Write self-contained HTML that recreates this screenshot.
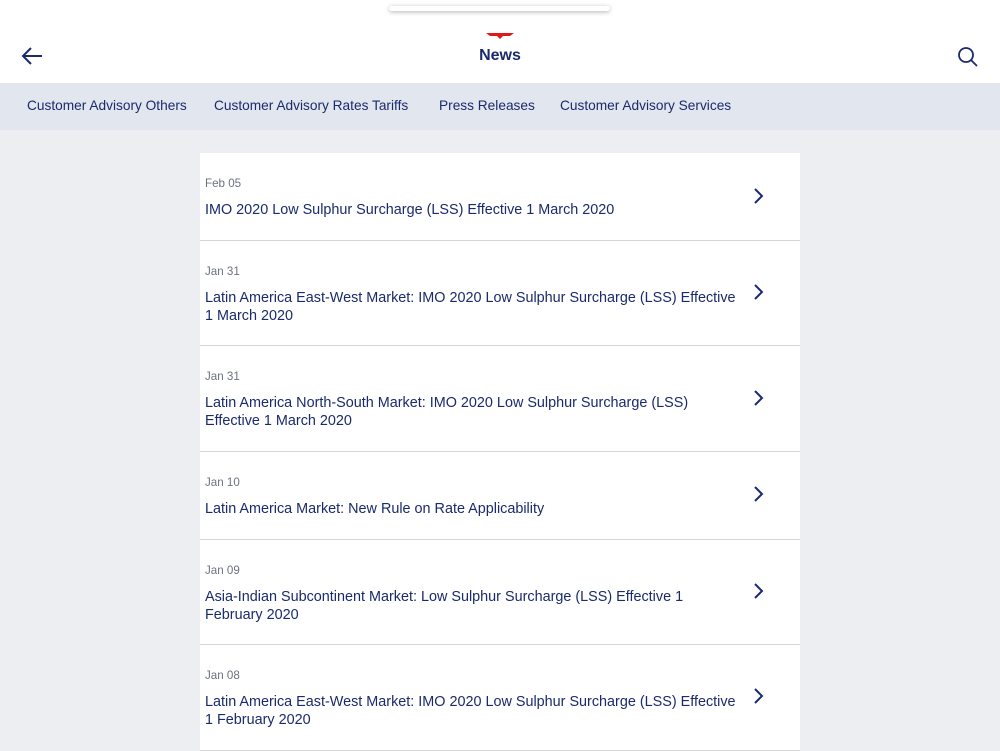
<!DOCTYPE html>
<html><head><style>
body{margin:0;width:1000px;height:750px;overflow:hidden;background:#eceef2;font-family:"Liberation Sans",sans-serif;color:#1a2a6c}
.top{position:absolute;top:0;left:0;width:1000px;height:83px;background:#fff}
.pill{position:absolute;left:389px;top:6px;width:221px;height:5px;border-radius:3px;background:#fff;box-shadow:0 1px 5px rgba(0,0,0,.3)}
.title{position:absolute;left:0;width:1000px;top:47px;text-align:center;font-weight:bold;font-size:16px;color:#1a2a6c}
.tabs{position:absolute;top:83px;left:0;width:1000px;height:47px;background:#e2e6ee;font-size:13.7px;color:#1a2a6c}
.tabs span{position:absolute;top:15px}
.list{position:absolute;left:200px;top:153px;width:600px;background:#fff}
.it{position:relative;padding:23px 60px 21px 5px;border-bottom:1px solid #d4d6da}
.it.two{padding-bottom:20.4px}
.d{font-size:11.6px;line-height:16px;color:#6b7280;margin-bottom:9px}
.t{font-size:14.4px;line-height:18px;color:#1a2a6c}
.ch{position:absolute;left:552px;top:50%;margin-top:-10px}
</style></head><body>
<div class="top">
<div class="pill"></div>
<svg style="position:absolute;left:20px;top:44px" width="24" height="24" viewBox="0 0 24 24"><path d="M22 12H3M11 4l-8 8 8 8" fill="none" stroke="#1a2a6c" stroke-width="2"/></svg>
<svg style="position:absolute;left:486px;top:32px" width="28" height="8" viewBox="0 0 28 8"><path d="M0 1h28l-4 3h-7l-3 3-3-3H4z" fill="#e01818"/></svg>
<div class="title">News</div>
<svg style="position:absolute;left:956px;top:45px" width="24" height="24" viewBox="0 0 24 24"><circle cx="10" cy="10" r="7" fill="none" stroke="#1a2a6c" stroke-width="1.8"/><path d="M15 15l6 6" stroke="#1a2a6c" stroke-width="1.8"/></svg>
</div>
<div class="tabs"><span style="left:27px">Customer Advisory Others</span><span style="left:214px">Customer Advisory Rates Tariffs</span><span style="left:439px">Press Releases</span><span style="left:560px">Customer Advisory Services</span></div>
<div class="list">
<div class="it"><div class="d">Feb 05</div><div class="t">IMO 2020 Low Sulphur Surcharge (LSS) Effective 1 March 2020</div><svg class="ch" width="12" height="18" viewBox="0 0 12 18"><path d="M3 2l7 7-7 7" fill="none" stroke="#1a2a6c" stroke-width="2"/></svg></div>
<div class="it two"><div class="d">Jan 31</div><div class="t">Latin America East-West Market: IMO 2020 Low Sulphur Surcharge (LSS) Effective<br>1 March 2020</div><svg class="ch" width="12" height="18" viewBox="0 0 12 18"><path d="M3 2l7 7-7 7" fill="none" stroke="#1a2a6c" stroke-width="2"/></svg></div>
<div class="it two"><div class="d">Jan 31</div><div class="t">Latin America North-South Market: IMO 2020 Low Sulphur Surcharge (LSS)<br>Effective 1 March 2020</div><svg class="ch" width="12" height="18" viewBox="0 0 12 18"><path d="M3 2l7 7-7 7" fill="none" stroke="#1a2a6c" stroke-width="2"/></svg></div>
<div class="it"><div class="d">Jan 10</div><div class="t">Latin America Market: New Rule on Rate Applicability</div><svg class="ch" width="12" height="18" viewBox="0 0 12 18"><path d="M3 2l7 7-7 7" fill="none" stroke="#1a2a6c" stroke-width="2"/></svg></div>
<div class="it two"><div class="d">Jan 09</div><div class="t">Asia-Indian Subcontinent Market: Low Sulphur Surcharge (LSS) Effective 1<br>February 2020</div><svg class="ch" width="12" height="18" viewBox="0 0 12 18"><path d="M3 2l7 7-7 7" fill="none" stroke="#1a2a6c" stroke-width="2"/></svg></div>
<div class="it two"><div class="d">Jan 08</div><div class="t">Latin America East-West Market: IMO 2020 Low Sulphur Surcharge (LSS) Effective<br>1 February 2020</div><svg class="ch" width="12" height="18" viewBox="0 0 12 18"><path d="M3 2l7 7-7 7" fill="none" stroke="#1a2a6c" stroke-width="2"/></svg></div>
</div>
</body></html>
